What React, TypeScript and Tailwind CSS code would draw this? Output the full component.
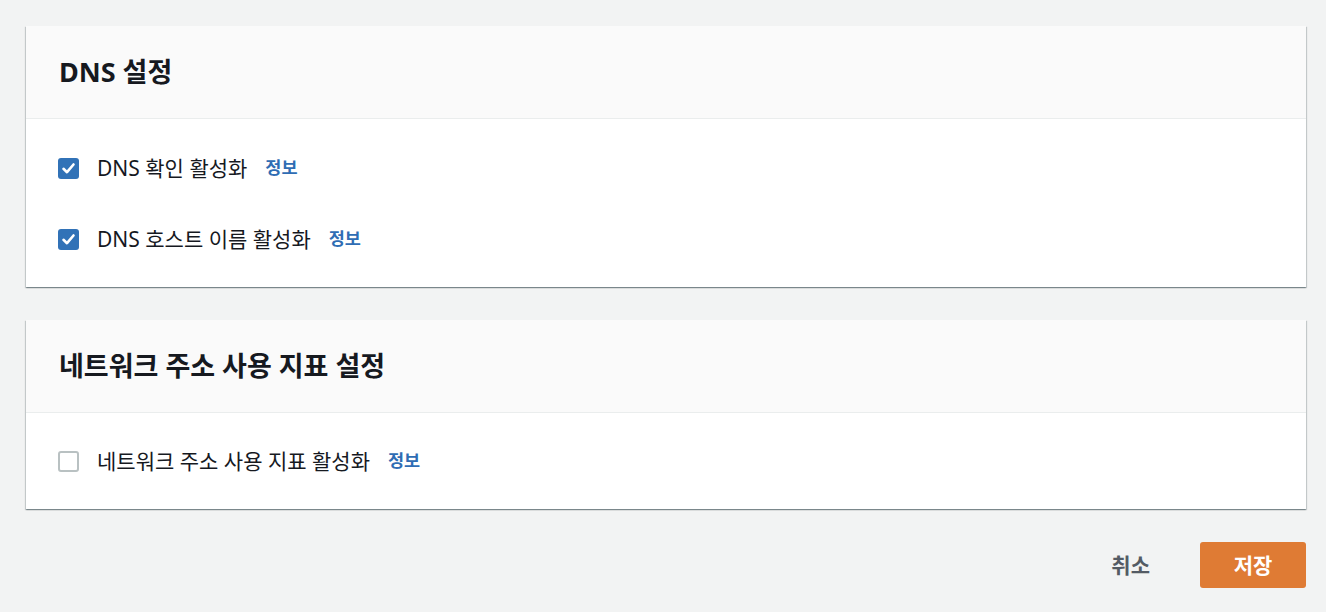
import React from "react";

const font = { fontFamily: '"Noto Sans", "Noto Sans CJK KR", sans-serif' };

function Check({ checked }: { checked: boolean }) {
  if (checked) {
    return (
      <div className="w-[21px] h-[21px] rounded-[3px] bg-[#3172b7] flex items-center justify-center shrink-0">
        <svg width="15" height="15" viewBox="0 0 15 15">
          <polyline points="2.5,7.8 6,11.2 12.5,3.5" fill="none" stroke="#ffffff" strokeWidth="2.6" strokeLinecap="round" strokeLinejoin="round" />
        </svg>
      </div>
    );
  }
  return <div className="w-[21px] h-[21px] rounded-[3px] border-2 border-[#b9c1c2] bg-white shrink-0" />;
}

function Row({ label, checked }: { label: string; checked: boolean }) {
  return (
    <div className="h-[30px] flex items-center">
      <Check checked={checked} />
      <span className="ml-[18px] text-[21px] text-[#16191f] leading-none">{label}</span>
      <span className="ml-[18px] text-[17.5px] font-bold text-[#2f6db4] leading-none">정보</span>
    </div>
  );
}

function Card({ title, children }: { title: string; children: React.ReactNode }) {
  return (
    <div className="bg-white shadow-[0_1px_1px_0_rgba(0,28,36,0.3),1px_1px_1px_0_rgba(0,28,36,0.15),-1px_1px_1px_0_rgba(0,28,36,0.15)]">
      <div className="h-[93px] bg-[#fafafa] border-b border-[#eaeded] flex items-center px-[33px]">
        <h2 className="text-[27px] font-bold text-[#16191f] leading-none -mt-[1px]">{title}</h2>
      </div>
      {children}
    </div>
  );
}

export default function App() {
  return (
    <div className="w-[1326px] h-[612px] bg-[#f2f3f3] overflow-hidden" style={font}>
      <div className="pt-[26px] pl-[26px] w-[1306px]">
        <Card title="DNS 설정">
          <div className="px-[32px] pt-[34px] pb-[33px] flex flex-col gap-[41px]">
            <Row label="DNS 확인 활성화" checked={true} />
            <Row label="DNS 호스트 이름 활성화" checked={true} />
          </div>
        </Card>
        <div className="h-[33px]" />
        <Card title="네트워크 주소 사용 지표 설정">
          <div className="px-[32px] pt-[33px] pb-[33px]">
            <Row label="네트워크 주소 사용 지표 활성화" checked={false} />
          </div>
        </Card>
        <div className="mt-[33px] flex justify-end items-center">
          <button className="mr-[50px] text-[21px] font-bold text-[#545b64] leading-none">취소</button>
          <button className="w-[106px] h-[46px] rounded-[3px] bg-[#df7b34] text-white text-[21px] font-bold leading-none flex items-center justify-center">저장</button>
        </div>
      </div>
    </div>
  );
}
